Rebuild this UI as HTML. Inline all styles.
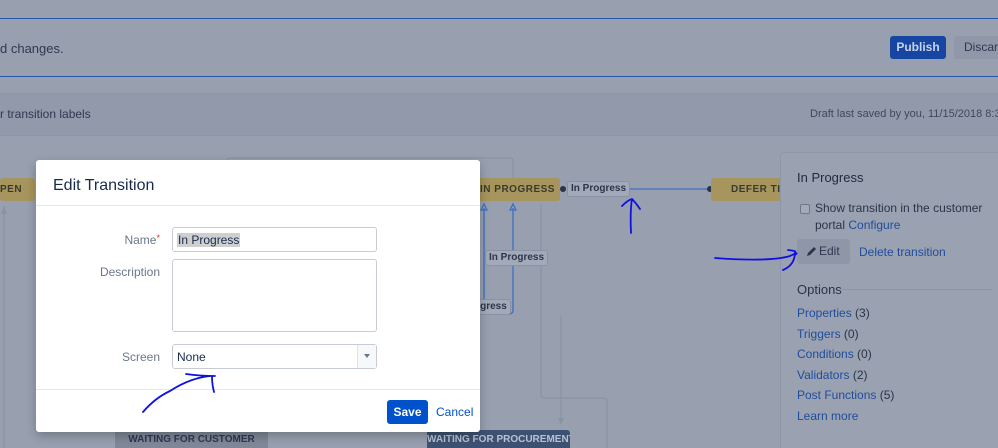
<!DOCTYPE html>
<html style="width:998px;height:448px;overflow:hidden"><head><meta charset="utf-8"><style>
*{box-sizing:border-box;margin:0;padding:0}
body{width:998px;height:448px;overflow:hidden;background:#98a0b0;font-family:"Liberation Sans",sans-serif;font-size:12px;color:#2a3447;position:relative}
.a{position:absolute;white-space:nowrap}
.node{position:absolute;white-space:nowrap;overflow:hidden;background:#a6955c;color:#3b3a2e;font-size:10px;font-weight:bold;letter-spacing:.5px;display:flex;align-items:center;border-radius:3px}
.lbl{position:absolute;white-space:nowrap;background:#a2aab9;border:1px solid #8a93a5;border-radius:3px;font-size:10px;font-weight:bold;color:#2d3648;padding:1px 3px;line-height:12px}
.lnk{color:#1f4c9c}
.inp{position:absolute;background:#fff;border:1px solid #c7ccd4;border-radius:3px}
.fl{position:absolute;font-size:12px;color:#6b778c;text-align:right;width:124px}
</style></head><body>
<div class="a" style="left:0;top:18px;width:998px;height:1px;background:#2b56b0"></div>
<div class="a" style="left:0;top:41px;font-size:13px;color:#2f3850">d changes.</div>
<div class="a" style="left:890px;top:36px;width:56px;height:23px;background:#1746a2;border-radius:3px;color:#c9d3e6;font-weight:bold;font-size:12px;text-align:center;line-height:23px">Publish</div>
<div class="a" style="left:954px;top:36px;width:50px;height:23px;background:#8f97a8;border-radius:3px;color:#2f3850;font-size:12px;line-height:23px;padding-left:10px;overflow:hidden">Discard</div>
<div class="a" style="left:0;top:76px;width:998px;height:1px;background:#2b56b0"></div>
<div class="a" style="left:0;top:93px;width:998px;height:43px;background:#9199aa;border-top:1px solid #8d95a6;border-bottom:1px solid #8d95a6"></div>
<div class="a" style="left:0;top:107px;font-size:12px;color:#2f3850">r transition labels</div>
<div class="a" style="left:810px;top:108px;font-size:11px;color:#3f485b">Draft last saved by you, 11/15/2018 8:34</div>

<svg class="a" style="left:0;top:0" width="998" height="448">
<g fill="none" stroke="#8a93a4" stroke-width="1.3">
<path d="M4 206 V448"/>
<path d="M228 160 V158 H510 Q513 158 513 162 V178"/>
<path d="M541 204 V395 Q541 398 544 398 H604 Q607 398 607 402 V448"/>
<path d="M561 316 V420"/>
</g>
<path d="M1 214 L4 206 L7 214Z" fill="#8a93a4"/>
<path d="M558 418 L561 425 L564 418Z" fill="#8a93a4"/>
<g fill="none" stroke="#3d6ec4" stroke-width="1.3">
<path d="M484 208 V305"/><path d="M513 208 V310 Q513 314 509 314 H480"/>
<path d="M481 210 L484 204 L487 210Z"/><path d="M510 210 L513 204 L516 210Z"/>
</g>
<path d="M621 189 H710" stroke="#3d6ec4" stroke-width="1.3"/>
<circle cx="563" cy="189" r="3" fill="#2a3447"/><circle cx="710" cy="189" r="3" fill="#2a3447"/>
</svg>
<div class="node" style="left:0;top:178px;width:35px;height:23px">PEN</div>
<div class="node" style="left:470px;top:178px;width:90px;height:23px;padding-left:10px">IN PROGRESS</div>
<div class="node" style="left:711px;top:178px;width:75px;height:23px;padding-left:20px">DEFER TICK</div>
<div class="lbl" style="left:567px;top:181px">In Progress</div>
<div class="lbl" style="left:485px;top:250px">In Progress</div>
<div class="lbl" style="left:470px;top:299px">ogress</div>
<div class="a" style="left:115px;top:430px;width:153px;height:18px;background:#7f8899;color:#2f3850;font-size:10px;font-weight:bold;text-align:center;line-height:20px">WAITING FOR CUSTOMER</div>
<div class="a" style="left:427px;top:430px;width:143px;height:18px;background:#3d5273;color:#b9c2d2;font-size:10px;font-weight:bold;text-align:center;line-height:20px;border-radius:3px 3px 0 0;overflow:hidden">WAITING FOR PROCUREMENT</div>

<div class="a" style="left:780px;top:152px;width:230px;height:300px;background:#9aa2b2;border:1px solid #8e97a8;border-radius:4px"></div>
<div class="a" style="left:797px;top:170px;font-size:13px;color:#222b3d">In Progress</div>
<div class="a" style="left:800px;top:204px;width:10px;height:10px;border:1px solid #6e7789;border-radius:2px;background:#a3abba"></div>
<div class="a" style="left:815px;top:200px;font-size:12px;line-height:17px;color:#2a3447">Show transition in the customer<br>portal <span class="lnk">Configure</span></div>
<div class="a" style="left:797px;top:239px;width:53px;height:25px;background:#8e96a7;border-radius:3px;font-size:12px;line-height:25px;padding-left:22px;color:#2f3850">Edit</div>
<svg class="a" style="left:806px;top:245px" width="12" height="12"><path d="M1 11 L2 8 L8 2 L10 4 L4 10Z" fill="#2a3447"/></svg>
<div class="a lnk" style="left:859px;top:245px;font-size:12px">Delete transition</div>
<div class="a" style="left:797px;top:282px;font-size:13px;color:#2a3447">Options</div>
<div class="a" style="left:842px;top:289px;width:150px;height:1px;background:#8a93a4"></div>
<div class="a" style="left:797px;top:303px;font-size:12px;line-height:20.5px;color:#2a3447">
<span class="lnk">Properties</span> (3)<br><span class="lnk">Triggers</span> (0)<br><span class="lnk">Conditions</span> (0)<br><span class="lnk">Validators</span> (2)<br><span class="lnk">Post Functions</span> (5)<br><span class="lnk">Learn more</span></div>

<div class="a" style="left:36px;top:160px;width:444px;height:272px;background:#fff;border-radius:3px;box-shadow:0 4px 10px rgba(0,0,0,.25)"></div>
<div class="a" style="left:53px;top:177px;font-size:16px;color:#172b4d">Edit Transition</div>
<div class="a" style="left:36px;top:205px;width:444px;height:1px;background:#e4e6ea"></div>
<div class="fl" style="left:36px;top:233px">Name<span style="color:#de350b;font-size:9px;vertical-align:top">*</span></div>
<div class="inp" style="left:172px;top:227px;width:205px;height:25px"><span style="position:absolute;left:4px;top:5px;background:#cfcfcf;color:#172b4d;font-size:12px;padding:0 1px">In Progress</span></div>
<div class="fl" style="left:36px;top:265px">Description</div>
<div class="inp" style="left:172px;top:259px;width:205px;height:73px"></div>
<div class="fl" style="left:36px;top:350px">Screen</div>
<div class="inp" style="left:172px;top:344px;width:205px;height:25px"><span style="position:absolute;left:4px;top:5px;color:#172b4d;font-size:12px">None</span><div style="position:absolute;right:0;top:0;width:19px;height:23px;border-left:1px solid #dfe1e6;background:#f7f8f9"></div><span style="position:absolute;right:6px;top:9px;border:3px solid transparent;border-top:4px solid #6b778c"></span></div>
<div class="a" style="left:36px;top:389px;width:444px;height:1px;background:#e4e6ea"></div>
<div class="a" style="left:387px;top:400px;width:41px;height:24px;background:#0052cc;border-radius:3px;color:#fff;font-weight:bold;font-size:12px;text-align:center;line-height:24px">Save</div>
<div class="a" style="left:436px;top:405px;font-size:12px;color:#0052cc">Cancel</div>

<svg class="a" style="left:0;top:0" width="998" height="448" fill="none" stroke="#1010e0" stroke-width="1.8" stroke-linecap="round">
<path d="M631 233 Q630 210 632 199 M622 206 Q628 200 632 199 Q636 203 640 209"/>
<path d="M715 258 Q770 262 790 256 Q800 251 795 255 M788 250 Q797 251 795 252 Q795 265 783 270"/>
<path d="M143 412 Q155 398 170 391 Q190 378 210 376 M186 374 Q200 376 215 376 M212 376 Q212 385 214 392"/>
</svg>
</body></html>
